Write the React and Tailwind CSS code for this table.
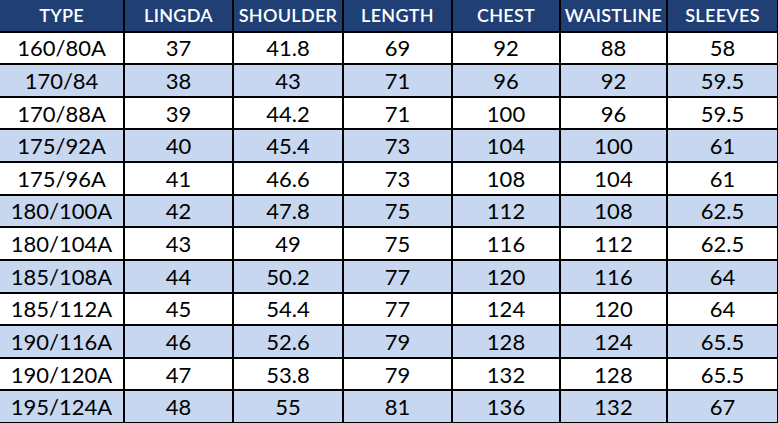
const headers = ['TYPE', 'LINGDA', 'SHOULDER', 'LENGTH', 'CHEST', 'WAISTLINE', 'SLEEVES'];

const rows = [
  ['160/80A', '37', '41.8', '69', '92', '88', '58'],
  ['170/84', '38', '43', '71', '96', '92', '59.5'],
  ['170/88A', '39', '44.2', '71', '100', '96', '59.5'],
  ['175/92A', '40', '45.4', '73', '104', '100', '61'],
  ['175/96A', '41', '46.6', '73', '108', '104', '61'],
  ['180/100A', '42', '47.8', '75', '112', '108', '62.5'],
  ['180/104A', '43', '49', '75', '116', '112', '62.5'],
  ['185/108A', '44', '50.2', '77', '120', '116', '64'],
  ['185/112A', '45', '54.4', '77', '124', '120', '64'],
  ['190/116A', '46', '52.6', '79', '128', '124', '65.5'],
  ['190/120A', '47', '53.8', '79', '132', '128', '65.5'],
  ['195/124A', '48', '55', '81', '136', '132', '67'],
];

export default function App() {
  return (
    <div className="w-[778px] h-[423px] bg-white overflow-hidden">
      <div
        className="grid h-[423px] w-[778px] gap-[2px] bg-black pb-[1px] pr-[1px] grid-cols-[123px_107px_108px_107px_106px_105px_109px] grid-rows-[repeat(13,minmax(0,1fr))]"
        style={{ fontFamily: 'Lato, "Open Sans", sans-serif' }}
      >
        {headers.map((h) => (
          <div
            key={h}
            className="flex items-center justify-center bg-[#1f3f75] text-white text-[18px] leading-none font-semibold tracking-[0.3px]"
          >
            {h}
          </div>
        ))}
        {rows.map((r, i) =>
          r.map((c, j) => (
            <div
              key={i + '-' + j}
              className={`flex items-center justify-center pt-[1px] text-black text-[22px] leading-none ${
                i % 2 === 1 ? 'bg-[#c6d7ef]' : 'bg-white'
              }`}
            >
              {c}
            </div>
          ))
        )}
      </div>
    </div>
  );
}
